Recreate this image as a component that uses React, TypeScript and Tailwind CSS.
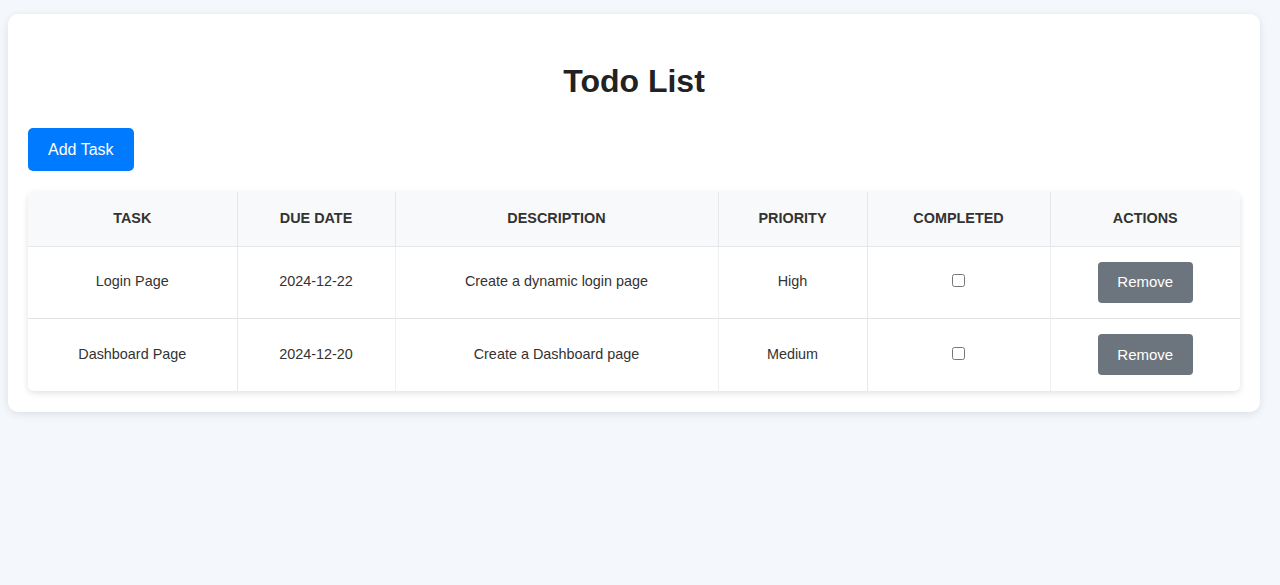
import React from "react";

const rows = [
  { task: "Login Page", due: "2024-12-22", desc: "Create a dynamic login page", pri: "High" },
  { task: "Dashboard Page", due: "2024-12-20", desc: "Create a Dashboard page", pri: "Medium" },
];

export default function App() {
  return (
    <div className="min-h-[585px] w-full bg-[#f4f7fb] pt-[14px] pl-[8px] pr-[20px]" style={{ fontFamily: '"Liberation Sans", Arial, sans-serif' }}>
      <div className="bg-white rounded-[10px] shadow-[0_2px_8px_rgba(0,0,0,0.1)] px-[20px] pt-[49px] pb-[21px]">
        <h1 className="text-center text-[32px] leading-[37px] font-bold text-[#222]">Todo List</h1>
        <button className="mt-[28px] h-[43px] px-[20px] bg-[#007bff] text-white text-[16px] rounded-[5px]">Add Task</button>
        <div className="mt-[21px] rounded-[6px] shadow-[0_2px_6px_rgba(0,0,0,0.12)] overflow-hidden">
          <table className="w-full border-collapse table-fixed text-[14.4px] text-[#333]">
            <colgroup>
              <col className="w-[209px]" />
              <col className="w-[158px]" />
              <col className="w-[323px]" />
              <col className="w-[149px]" />
              <col className="w-[183px]" />
              <col className="w-[190px]" />
            </colgroup>
            <thead>
              <tr className="bg-[#f8f9fa] h-[54px] border-b border-[#e5e7eb]">
                {["TASK", "DUE DATE", "DESCRIPTION", "PRIORITY", "COMPLETED", "ACTIONS"].map((h, i) => (
                  <th key={h} className={`font-bold text-center ${i > 0 ? "border-l border-[#e5e7eb]" : ""}`}>{h}</th>
                ))}
              </tr>
            </thead>
            <tbody>
              {rows.map((r, idx) => (
                <tr key={r.task} className={`${idx === 0 ? "h-[72px] border-b border-[#e3e3e3]" : "h-[73px]"}`}>
                  <td className="text-center">{r.task}</td>
                  <td className="text-center border-l border-[#e5e7eb]">{r.due}</td>
                  <td className="text-center border-l border-[#f0f0f0]">{r.desc}</td>
                  <td className="text-center border-l border-[#f0f0f0]">{r.pri}</td>
                  <td className="text-center border-l border-[#e5e7eb]">
                    <input type="checkbox" className="w-[13px] h-[13px] align-middle -mt-[4px]" />
                  </td>
                  <td className="text-center border-l border-[#f0f0f0]">
                    <button className="w-[95px] h-[41px] bg-[#6c757d] text-white text-[15px] rounded-[4px]">Remove</button>
                  </td>
                </tr>
              ))}
            </tbody>
          </table>
        </div>
      </div>
    </div>
  );
}
